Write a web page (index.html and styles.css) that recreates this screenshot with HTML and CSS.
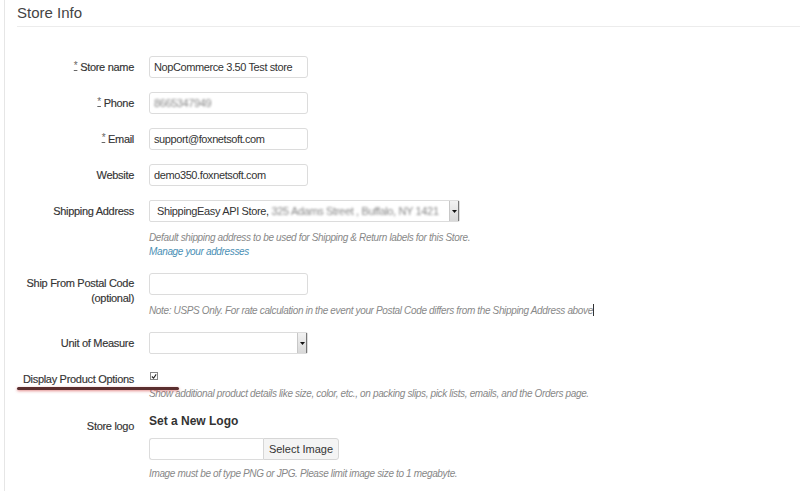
FILE: index.html
```html
<!DOCTYPE html>
<html>
<head>
<meta charset="utf-8">
<link rel="stylesheet" href="styles.css">
</head>
<body>
<div class="page">
  <div class="panel">
    <h1 class="title">Store Info</h1>
    <div class="form">
      <div class="row r-first">
        <div class="label"><span class="req">*</span> Store name</div>
        <div class="ctrl"><div class="input">NopCommerce 3.50 Test store</div></div>
      </div>
      <div class="row">
        <div class="label"><span class="req">*</span> Phone</div>
        <div class="ctrl"><div class="input"><span class="blur">8665347949</span></div></div>
      </div>
      <div class="row">
        <div class="label"><span class="req">*</span> Email</div>
        <div class="ctrl"><div class="input">support@foxnetsoft.com</div></div>
      </div>
      <div class="row">
        <div class="label">Website</div>
        <div class="ctrl"><div class="input">demo350.foxnetsoft.com</div></div>
      </div>
      <div class="row">
        <div class="label">Shipping Address</div>
        <div class="ctrl">
          <div class="select wide"><span class="sel-text">ShippingEasy API Store, <span class="blur">325 Adams Street , Buffalo, NY 1421</span></span><span class="arrow"><svg width="5" height="3" viewBox="0 0 5 3"><path d="M0 0H5L2.5 3Z" fill="#111"/></svg></span></div>
          <div class="help h-first">Default shipping address to be used for Shipping &amp; Return labels for this Store.</div>
          <div class="help"><a class="link">Manage your addresses</a></div>
        </div>
      </div>
      <div class="row">
        <div class="label two">Ship From Postal Code<br>(optional)</div>
        <div class="ctrl">
          <div class="input"></div>
          <div class="help h-first">Note: USPS Only. For rate calculation in the event your Postal Code differs from the Shipping Address above<span class="caret"></span></div>
        </div>
      </div>
      <div class="row">
        <div class="label">Unit of Measure</div>
        <div class="ctrl"><div class="select"><span class="sel-text"></span><span class="arrow"><svg width="5" height="3" viewBox="0 0 5 3"><path d="M0 0H5L2.5 3Z" fill="#111"/></svg></span></div></div>
      </div>
      <div class="row r-check">
        <div class="label mark">Display Product Options</div>
        <div class="ctrl">
          <div class="checkline"><span class="checkbox"><svg width="7" height="7" viewBox="0 0 7 7"><path d="M1 3.5L3 5.5L6 1" stroke="#222" stroke-width="1.3" fill="none"/></svg></span></div>
          <div class="help h-check">Show additional product details like size, color, etc., on packing slips, pick lists, emails, and the Orders page.</div>
        </div>
      </div>
      <div class="row r-logo">
        <div class="label">Store logo</div>
        <div class="ctrl">
          <div class="subhead">Set a New Logo</div>
          <div class="group"><div class="g-input"></div><div class="g-btn">Select Image</div></div>
          <div class="help h-logo">Image must be of type PNG or JPG. Please limit image size to 1 megabyte.</div>
        </div>
      </div>
    </div>
  </div>
</div>
</body>
</html>
```
FILE: styles.css
```css
* { box-sizing: border-box; }
html, body { margin: 0; padding: 0; background: #fff; }
body {
  font-family: "Liberation Sans", Arial, sans-serif;
  font-size: 11px;
  color: #333;
  width: 800px;
  height: 491px;
  overflow: hidden;
}
.page { padding-left: 4px; }
.panel {
  border-left: 1px solid #e6e6e6;
  height: 491px;
  padding-left: 12px;
}
.title {
  margin: 0;
  padding-top: 4px;
  height: 27px;
  font-size: 15px;
  font-weight: normal;
  color: #444;
  line-height: 18px;
  border-bottom: 1px solid #ececec;
}
.form { padding-top: 29px; }
.row {
  display: grid;
  grid-template-columns: 117px 1fr;
  column-gap: 15px;
  margin-top: 14px;
  align-items: start;
}
.row.r-first { margin-top: 0; }
.label {
  text-align: right;
  height: 22px;
  line-height: 22px;
  color: #333;
  white-space: nowrap;
  letter-spacing: -0.3px;
  -webkit-text-stroke: 0.15px #333;
}
.label.two { line-height: 15px; padding-top: 3px; height: auto; }
.req { color: #666; text-decoration: underline; font-size: 10px; line-height: 0; position: relative; top: -2px; -webkit-text-stroke: 0; }
.input {
  width: 159px;
  height: 22px;
  border: 1px solid #dcdcdc;
  border-radius: 3px;
  padding-left: 4px;
  line-height: 20px;
  color: #333;
  white-space: nowrap;
  overflow: hidden;
  letter-spacing: -0.4px;
}
.blur { filter: blur(1.1px); color: #888; }
.select {
  width: 159px;
  height: 22px;
  border: 1px solid #dcdcdc;
  border-radius: 2px;
  display: flex;
  align-items: stretch;
}
.select.wide { width: 311px; }
.sel-text {
  flex: 1;
  padding-left: 7px;
  line-height: 20px;
  white-space: nowrap;
  overflow: hidden;
  letter-spacing: -0.35px;
}
.arrow {
  width: 10px;
  background: linear-gradient(#f2f2f2, #d8d8d8);
  border-left: 1px solid #c8c8c8;
  border-right: 1px solid #777;
  display: flex;
  align-items: center;
  justify-content: center;
}
.help {
  font-style: italic;
  font-size: 10px;
  letter-spacing: -0.35px;
  color: #888;
  line-height: 14px;
  height: 14px;
  white-space: nowrap;
}
.help.h-first { margin-top: 9px; }
.link { color: #4a8fb5; }
.caret { display: inline-block; width: 1px; height: 12px; background: #333; vertical-align: -2px; }
.r-check { margin-top: 18px; }
.r-check .label { line-height: 14px; height: 14px; }
.checkline { height: 14px; display: flex; align-items: center; padding-left: 1px; }
.checkbox {
  width: 8px;
  height: 8px;
  border: 1px solid #888;
  display: flex;
  align-items: center;
  justify-content: center;
  margin-top: -6px;
}
.help.h-check { margin-top: 1px; }
.mark { position: relative; }
.mark::after {
  content: "";
  position: absolute;
  left: 0;
  top: 15px;
  width: 162px;
  height: 3px;
  border-radius: 2px;
  background: #5a2e2e;
  box-shadow: 0 1px 3px rgba(200, 40, 40, 0.55);
}
.r-logo { margin-top: 13px; }
.r-logo .label { line-height: 24px; }
.subhead { font-weight: bold; font-size: 12px; line-height: 14px; height: 14px; color: #333; }
.group { display: flex; margin-top: 10px; height: 22px; }
.g-input { width: 114px; border: 1px solid #dcdcdc; border-right: none; border-radius: 3px 0 0 3px; }
.g-btn {
  width: 76px;
  border: 1px solid #d6d6d6;
  border-radius: 0 3px 3px 0;
  background: #f4f4f4;
  text-align: center;
  line-height: 20px;
  font-size: 11px;
  color: #333;
}
.help.h-logo { margin-top: 7px; }
```
